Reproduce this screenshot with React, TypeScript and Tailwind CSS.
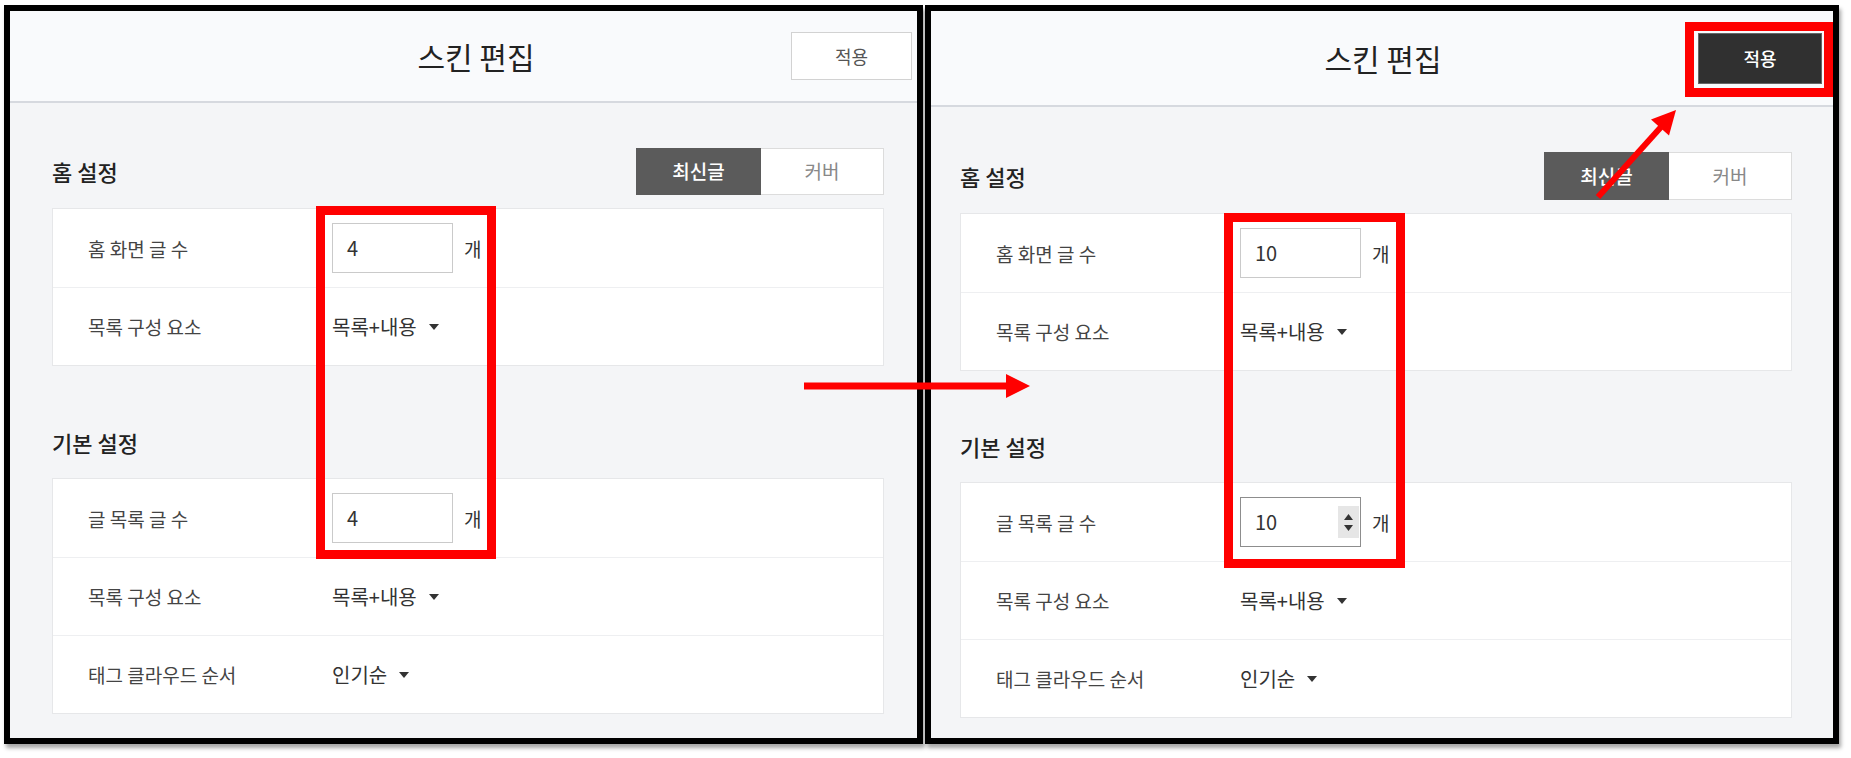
import React from 'react';

const Caret = () => (
  <svg width="10" height="6" viewBox="0 0 10 6" className="ml-[12px]">
    <path d="M0 0h10L5 6z" fill="#333" />
  </svg>
);

type RowProps = { label: string; children: React.ReactNode; first?: boolean };
const Row = ({ label, children, first }: RowProps) => (
  <div className={`flex items-center h-[78px] pl-[35px] ${first ? '' : 'border-t border-[#eeeff1]'}`}>
    <div className="w-[244px] text-[19px] text-[#444] leading-none">{label}</div>
    <div className="flex items-center text-[20px] text-[#333] leading-none">{children}</div>
  </div>
);

const NumBox = ({ value, spinner }: { value: string; spinner?: boolean }) => (
  <div className="flex items-center">
    <div
      className={`w-[121px] h-[50px] bg-white flex items-center justify-between pl-[14px] pr-[1px] text-[20px] text-[#333] border ${
        spinner ? 'border-[#8d8d8d]' : 'border-[#cacaca]'
      }`}
    >
      <span>{value}</span>
      {spinner && (
        <div className="w-[21px] h-[32px] bg-[#e6e6e6] flex flex-col items-center justify-center gap-[5px]">
          <svg width="9" height="6" viewBox="0 0 9 6">
            <path d="M0 6h9L4.5 0z" fill="#333" />
          </svg>
          <svg width="9" height="6" viewBox="0 0 9 6">
            <path d="M0 0h9L4.5 6z" fill="#333" />
          </svg>
        </div>
      )}
    </div>
    <span className="ml-[11px] text-[19px] text-[#333]">개</span>
  </div>
);

type PanelProps = { right?: boolean };
const Panel = ({ right }: PanelProps) => (
  <div
    className={`flex flex-col h-[739px] border-[6px] border-black bg-[#f4f5f7] shadow-[2px_4px_4px_rgba(0,0,0,0.35)] ${
      right ? 'w-[914px]' : 'w-[919px]'
    }`}
  >
    <div
      className={`grid grid-cols-[1fr_auto_1fr] items-center shrink-0 bg-[#f9fafc] border-b-2 border-[#d6d9df] ${
        right ? 'h-[96px] pl-[13px] pr-[11px]' : 'h-[92px] pl-[30px] pr-[5px]'
      }`}
    >
      <div />
      <div className="text-[30px] text-[#222] leading-none">스킨 편집</div>
      <div className="flex justify-end">
        {right ? (
          <div className="w-[124px] h-[51px] bg-[#303030] border border-[#666] flex items-center justify-center text-[18px] text-white font-medium">
            적용
          </div>
        ) : (
          <div className="w-[121px] h-[48px] bg-white border border-[#d2d2d2] flex items-center justify-center text-[18px] text-[#555]">
            적용
          </div>
        )}
      </div>
    </div>
    <div className={`flex flex-col pt-[45px] ${right ? 'pl-[29px] pr-[41px]' : 'pl-[42px] pr-[33px]'}`}>
      <div className={`flex items-center justify-between ${right ? 'h-[48px]' : 'h-[47px]'}`}>
        <div className="text-[22px] text-[#222] font-medium">홈 설정</div>
        <div className="flex h-full">
          <div className="w-[125px] h-full bg-[#5b5b5b] flex items-center justify-center text-[19px] text-white font-medium">
            최신글
          </div>
          <div className="w-[123px] h-full bg-white border border-[#dcdcdc] border-l-0 flex items-center justify-center text-[19px] text-[#888]">
            커버
          </div>
        </div>
      </div>
      <div className="mt-[13px] bg-white border border-[#e6e7e9]">
        <Row label="홈 화면 글 수" first>
          <NumBox value={right ? '10' : '4'} />
        </Row>
        <Row label="목록 구성 요소">
          목록+내용
          <Caret />
        </Row>
      </div>
      <div className={`flex items-center text-[22px] text-[#222] font-medium ${right ? 'mt-[51px] h-[48px]' : 'mt-[53px] h-[47px]'}`}>
        기본 설정
      </div>
      <div className="mt-[12px] bg-white border border-[#e6e7e9]">
        <Row label="글 목록 글 수" first>
          <NumBox value={right ? '10' : '4'} spinner={right} />
        </Row>
        <Row label="목록 구성 요소">
          목록+내용
          <Caret />
        </Row>
        <Row label="태그 클라우드 순서">
          인기순
          <Caret />
        </Row>
      </div>
    </div>
  </div>
);

export default function App() {
  return (
    <div className="relative w-[1851px] h-[758px] bg-white overflow-hidden font-['Noto_Sans_CJK_KR','Noto_Sans',sans-serif]">
      <div className="flex gap-[2px] pt-[5px] pl-[4px]">
        <Panel />
        <Panel right />
      </div>

      {/* red annotation boxes */}
      <div className="absolute left-[316px] top-[206px] w-[180px] h-[353px] border-[9px] border-[#ff0000]" />
      <div className="absolute left-[1224px] top-[213px] w-[181px] h-[355px] border-[9px] border-[#ff0000]" />
      <div className="absolute left-[1685px] top-[22px] w-[148px] h-[75px] border-[9px] border-[#ff0000]" />

      {/* horizontal arrow */}
      <svg className="absolute left-[800px] top-[370px]" width="235" height="32" viewBox="0 0 235 32">
        <rect x="4" y="12.5" width="204" height="7" fill="#ff0000" />
        <path d="M206 4L230 16L206 28z" fill="#ff0000" />
      </svg>

      {/* diagonal arrow */}
      <svg className="absolute left-[1590px] top-[100px]" width="100" height="105" viewBox="0 0 100 105">
        <line x1="8" y1="97" x2="71" y2="27" stroke="#ff0000" strokeWidth="6" />
        <path d="M86 10L79 35.5L61 19.5z" fill="#ff0000" />
      </svg>
    </div>
  );
}
